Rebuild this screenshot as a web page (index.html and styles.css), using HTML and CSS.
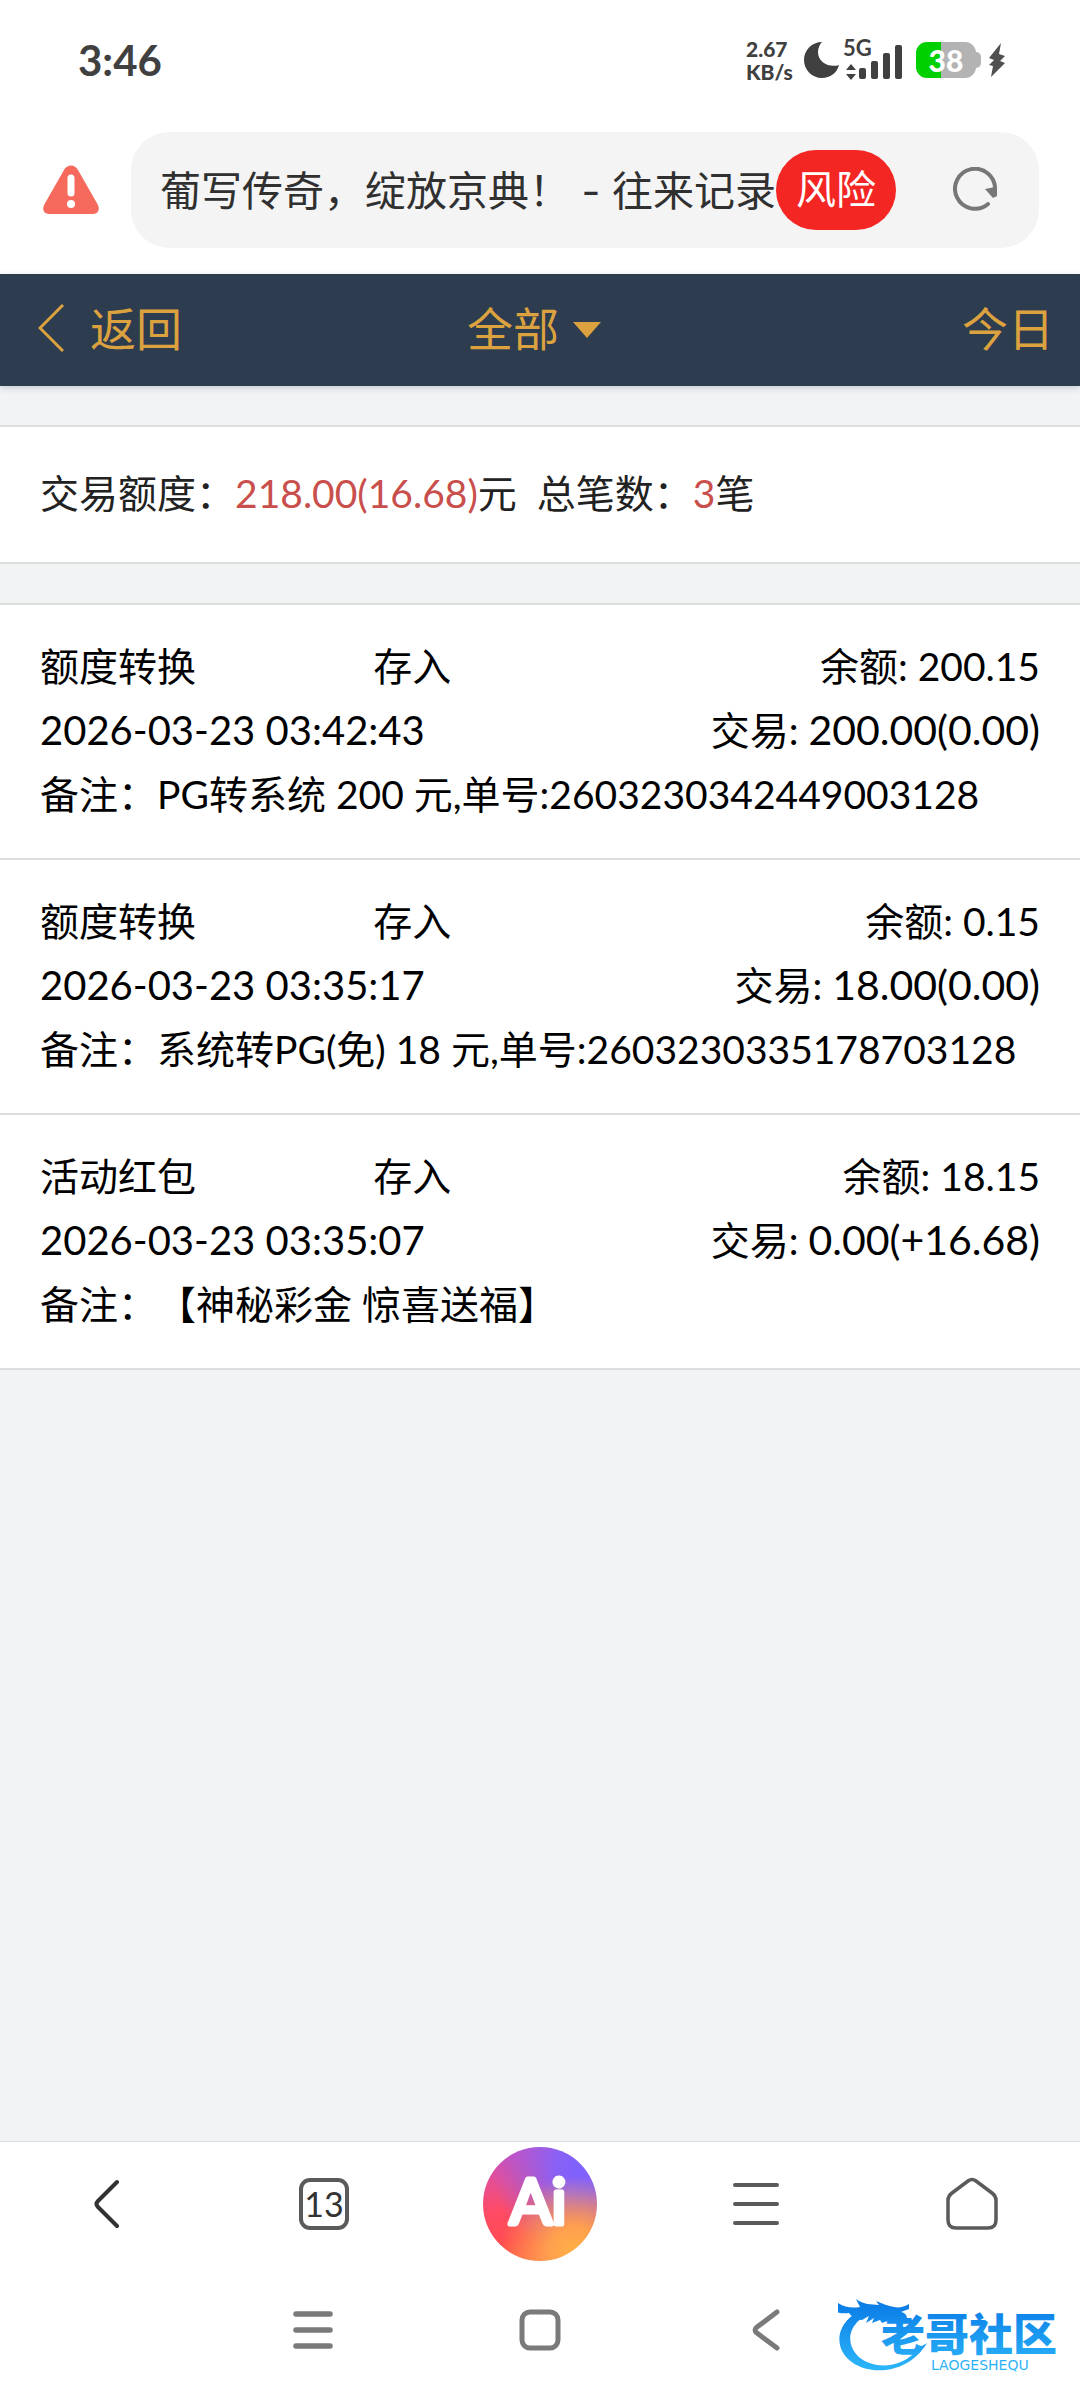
FILE: index.html
```html
<!DOCTYPE html>
<html lang="zh-CN">
<head>
<meta charset="utf-8">
<meta name="viewport" content="width=device-width, initial-scale=1">
<title>往来记录</title>
<link rel="stylesheet" href="styles.css">
</head>
<body>
<div class="phone">
  <div class="status">
    <time class="clock">3:46</time>
    <div class="indicators">
      <div class="speed"><span>2.67</span><span>KB/s</span></div>
      <svg class="moon" width="36" height="38" viewBox="0 0 36 38" aria-hidden="true"><path d="M19 1C9 1 1 9 1 19s8 18 18 18c8 0 15-5 17-13-9 3-21-2-21-13 0-4 2-8 4-10z" fill="#404040"/></svg>
      <svg class="signal" width="60" height="52" viewBox="0 -6 60 52" aria-label="5G">
        <text x="0" y="16" class="signal-text">5G</text>
        <g fill="#404040"><path d="M8 24l5 6H3zM8 40l5-6H3z"/><rect x="16" y="28" width="7" height="11" rx="2"/><rect x="28" y="21" width="7" height="18" rx="2"/><rect x="40" y="13" width="7" height="26" rx="2"/><rect x="52" y="5" width="7" height="34" rx="2"/></g>
      </svg>
      <div class="power">
        <span class="battery">38</span><span class="nub"></span>
      </div>
      <svg class="bolt" width="18" height="34" viewBox="0 0 18 34" aria-hidden="true"><path d="M13 0L1 15l5 2-5 5 4 1-2 11 14-14-5-2 5-5-6-2z" fill="#505050"/></svg>
    </div>
  </div>

  <div class="address">
    <svg class="warn" width="56" height="50" viewBox="0 0 56 50" aria-label="警告"><path d="M21 5c3-6 11-6 14 0l20 35c2 5 0 9-5 9H6c-5 0-7-4-5-9z" fill="#f56a5d"/><path d="M28 13v15" stroke="#fff" stroke-width="7" stroke-linecap="round"/><circle cx="28" cy="39" r="4" fill="#fff"/></svg>
    <div class="field">
      <span class="title">葡写传奇，绽放京典！ - 往来记录</span>
      <span class="risk">风险</span>
      <button class="reload" aria-label="刷新"><svg width="44" height="46" viewBox="0 0 44 46"><path d="M35 37A20 20 0 1 1 42 23v5" fill="none" stroke="#777" stroke-width="4" stroke-linecap="round"/><path d="M32 22l10-2 1 9-3 2z" fill="#777"/></svg></button>
    </div>
  </div>

  <header class="topbar">
    <a class="back" href="#"><svg width="26" height="48" viewBox="0 0 26 48" aria-hidden="true"><path d="M25 1L2 24l23 23" fill="none" stroke="#dba23f" stroke-width="3"/></svg><span class="label">返回</span></a>
    <button class="filter"><span class="label">全部</span><span class="caret"></span></button>
    <a class="day label" href="#">今日</a>
  </header>

  <main class="content">
    <section class="summary">交易额度：<span class="red">218.00(16.68)</span>元&nbsp; 总笔数：<span class="red">3</span>笔</section>
    <ul class="records">
      <li class="record">
        <div class="kind"><span>额度转换</span><span>存入</span><span class="right">余额: 200.15</span></div>
        <div class="detail"><time class="date">2026-03-23 03:42:43</time><span>交易: <span class="figure">200.00(0.00)</span></span></div>
        <div class="note">备注：PG转系统 200 元,单号:2603230342449003128</div>
      </li>
      <li class="record">
        <div class="kind"><span>额度转换</span><span>存入</span><span class="right">余额: 0.15</span></div>
        <div class="detail"><time class="date">2026-03-23 03:35:17</time><span>交易: <span class="figure">18.00(0.00)</span></span></div>
        <div class="note">备注：系统转PG(免) 18 元,单号:2603230335178703128</div>
      </li>
      <li class="record">
        <div class="kind"><span>活动红包</span><span>存入</span><span class="right">余额: 18.15</span></div>
        <div class="detail"><time class="date">2026-03-23 03:35:07</time><span>交易: <span class="figure">0.00(+16.68)</span></span></div>
        <div class="note">备注：【神秘彩金 惊喜送福】</div>
      </li>
    </ul>
  </main>

  <nav class="toolbar">
    <button aria-label="后退"><svg width="28" height="52" viewBox="0 0 28 52"><path d="M23 4L4 23q-3 3 0 6l19 19" fill="none" stroke="#333" stroke-width="4" stroke-linecap="round"/></svg></button>
    <button aria-label="标签页"><span class="tabs">13</span></button>
    <button aria-label="AI"><span class="ai"><svg width="114" height="114" viewBox="0 0 114 114"><text x="55" y="77" class="ai-text">Ai</text></svg></span></button>
    <button aria-label="菜单"><svg width="46" height="44" viewBox="0 0 46 44"><path d="M2 3h42M2 22h42M2 41h42" stroke="#5a5a5a" stroke-width="4" stroke-linecap="round"/></svg></button>
    <button aria-label="主页"><svg width="52" height="54" viewBox="0 0 52 54"><path d="M22 4q4-3 8 0l16 12q4 3 4 7v20q0 8-8 8H10q-8 0-8-8V23q0-4 4-7z" fill="none" stroke="#5a5a5a" stroke-width="3.5"/></svg></button>
  </nav>

  <div class="system">
    <button aria-label="最近任务"><svg width="40" height="42" viewBox="0 0 40 42"><path d="M3 5h34M3 21h34M3 37h34" stroke="#7a7a7a" stroke-width="5.5" stroke-linecap="round"/></svg></button>
    <button aria-label="桌面"><svg width="42" height="42" viewBox="0 0 42 42"><rect x="3" y="3" width="36" height="36" rx="8" fill="none" stroke="#7a7a7a" stroke-width="5"/></svg></button>
    <button aria-label="返回"><svg width="40" height="42" viewBox="0 0 40 42"><path d="M30 3L10 18q-4 3 0 6l20 15" fill="none" stroke="#7a7a7a" stroke-width="5" stroke-linecap="round" stroke-linejoin="round"/></svg></button>
    <svg class="mark" width="226" height="82" viewBox="0 0 226 82" aria-label="老哥社区">
      <defs><linearGradient id="blue" gradientUnits="userSpaceOnUse" x1="0" y1="8" x2="0" y2="78"><stop offset="0" stop-color="#0a7be6"/><stop offset="1" stop-color="#2db8fa"/></linearGradient></defs>
      <g fill="url(#blue)">
        <path d="M30 14C2 22-7 48 10 65c19 18 60 16 79-16-4 3-8 3-9 6C63 76 32 76 18 60 5 44 15 24 37 18z"/>
        <path d="M0 9c8 5 14 5 22 4l-4-8c8 6 15 5 23 6l-3-4c7 3 12 5 18 6 5 1 10 0 15-3v5l-8 3c4 1 6 3 6 7l-10-2 6 4-13-1-8 3-2-3-8 3 2-5-8 5 3-7-7 4c-6 0-10-3-13-7-7 1-14 0-19-6z"/>
        <text x="43" y="57" class="mark-name">老哥社区</text>
        <text x="93" y="76" class="mark-latin">LAOGESHEQU</text>
      </g>
    </svg>
  </div>
</div>
</body>
</html>
```
FILE: styles.css
```css
* { box-sizing: border-box; }
body {
  margin: 0;
  background: #fff;
  color: #000;
  font-family: Lato, "Noto Sans CJK SC", sans-serif;
  font-size: 39px;
  text-spacing-trim: space-all;
}
button {
  padding: 0;
  border: 0;
  background: none;
  color: inherit;
  font: inherit;
}
a { color: inherit; text-decoration: none; }
svg { display: block; flex: none; }
.phone { display: flex; flex-direction: column; min-height: 100vh; }

.status {
  display: flex;
  align-items: center;
  justify-content: space-between;
  height: 120px;
  padding: 0 74px 0 78px;
  color: #404040;
}
.clock { font-size: 42px; font-weight: 700; line-height: 50px; }
.indicators { display: flex; align-items: center; }
.speed {
  display: flex;
  flex-direction: column;
  width: 57px;
  font-size: 21px;
  font-weight: 900;
  line-height: 23px;
}
.signal { margin: 0 13px 0 4px; }
.signal-text { font-size: 22px; font-weight: 700; fill: #404040; }
.power { display: flex; align-items: center; margin-right: 7px; }
.battery {
  width: 60px;
  height: 36px;
  border-radius: 11px;
  background: linear-gradient(90deg, #00cf00 42%, #b3b3b3 42%);
  color: #fff;
  font-size: 30px;
  font-weight: 900;
  line-height: 36px;
  text-align: center;
}
.nub { width: 5px; height: 16px; border-radius: 0 5px 5px 0; background: #b3b3b3; }

.address {
  display: flex;
  align-items: center;
  gap: 32px;
  padding: 12px 41px 26px 43px;
}
.field {
  display: flex;
  flex: 1;
  align-items: center;
  height: 116px;
  padding: 0 42px 0 29px;
  border-radius: 38px;
  background: #f4f4f4;
}
.title {
  padding-bottom: 5px;
  color: #303030;
  font-family: Inter, "Noto Sans CJK SC", sans-serif;
  font-size: 41px;
  white-space: nowrap;
}
.risk {
  width: 120px;
  height: 80px;
  border-radius: 40px;
  background: #f32624;
  color: #fff;
  font-size: 40px;
  line-height: 78px;
  text-align: center;
}
.reload { margin-left: auto; }

.topbar {
  display: grid;
  position: relative;
  grid-template-columns: 1fr auto 1fr;
  align-items: center;
  height: 112px;
  padding: 0 26px 4px 38px;
  background: #2d3c4e;
  box-shadow: 0 2px 6px #c5ccd3;
  color: #dba23f;
  font-size: 46px;
}
.label { padding-bottom: 5px; }
.back { display: flex; align-items: center; gap: 26px; }
.filter { display: flex; align-items: center; gap: 14px; margin-right: 24px; }
.caret {
  margin-top: 4px;
  border: 14px solid transparent;
  border-top: 16px solid #dba23f;
  border-bottom: 0;
}
.day { justify-self: end; }

.content { flex: 1; padding-top: 39px; background: #f2f3f5; }
.summary {
  padding: 34px 40px 37px;
  border: solid #dcdddd;
  border-width: 2px 0;
  background: #fff;
  color: #222;
  line-height: 64px;
}
.red { color: #c94f4c; }
.records {
  margin: 39px 0 0;
  padding: 0;
  border-top: 2px solid #dcdddd;
  list-style: none;
}
.record {
  padding: 29px 40px 32px;
  border-bottom: 2px solid #dcdddd;
  background: #fff;
  line-height: 64px;
}
.kind { display: grid; grid-template-columns: repeat(3, 1fr); }
.right { text-align: right; }
.detail { display: flex; justify-content: space-between; }
.date { font-size: 40px; }
.figure { font-size: 41px; }

.toolbar {
  display: grid;
  grid-template-columns: repeat(5, 1fr);
  align-items: center;
  height: 126px;
  padding-bottom: 2px;
  border-top: 1px solid #dcdddd;
}
.toolbar button { display: flex; justify-content: center; }
.tabs {
  width: 50px;
  height: 52px;
  border: 4px solid #5a5a5a;
  border-radius: 11px;
  color: #333;
  font-size: 34px;
  line-height: 44px;
  text-align: center;
}
.ai {
  border-radius: 50%;
  background:
    radial-gradient(circle at 80% 92%, #ffb046 0, #ffa04e 18%, transparent 54%),
    radial-gradient(circle at 86% 18%, #7d62ff 0, #8b60f4 20%, transparent 66%),
    linear-gradient(170deg, #d450b4 10%, #ff4b65 50%, #ff4b50 75%, #ff6a4a);
}
.ai-text {
  fill: #fff;
  stroke: #fff;
  stroke-width: 5px;
  stroke-linejoin: round;
  font-size: 62px;
  font-weight: 400;
  text-anchor: middle;
}

.system {
  display: flex;
  position: relative;
  justify-content: center;
  gap: 186px;
  height: 133px;
  padding-top: 42px;
}
.system button { height: 42px; }
.mark { position: absolute; right: 16px; bottom: 24px; }
.mark-name { font-size: 44px; font-weight: 900; }
.mark-latin { font-family: "DejaVu Sans", sans-serif; font-size: 14px; }
```
